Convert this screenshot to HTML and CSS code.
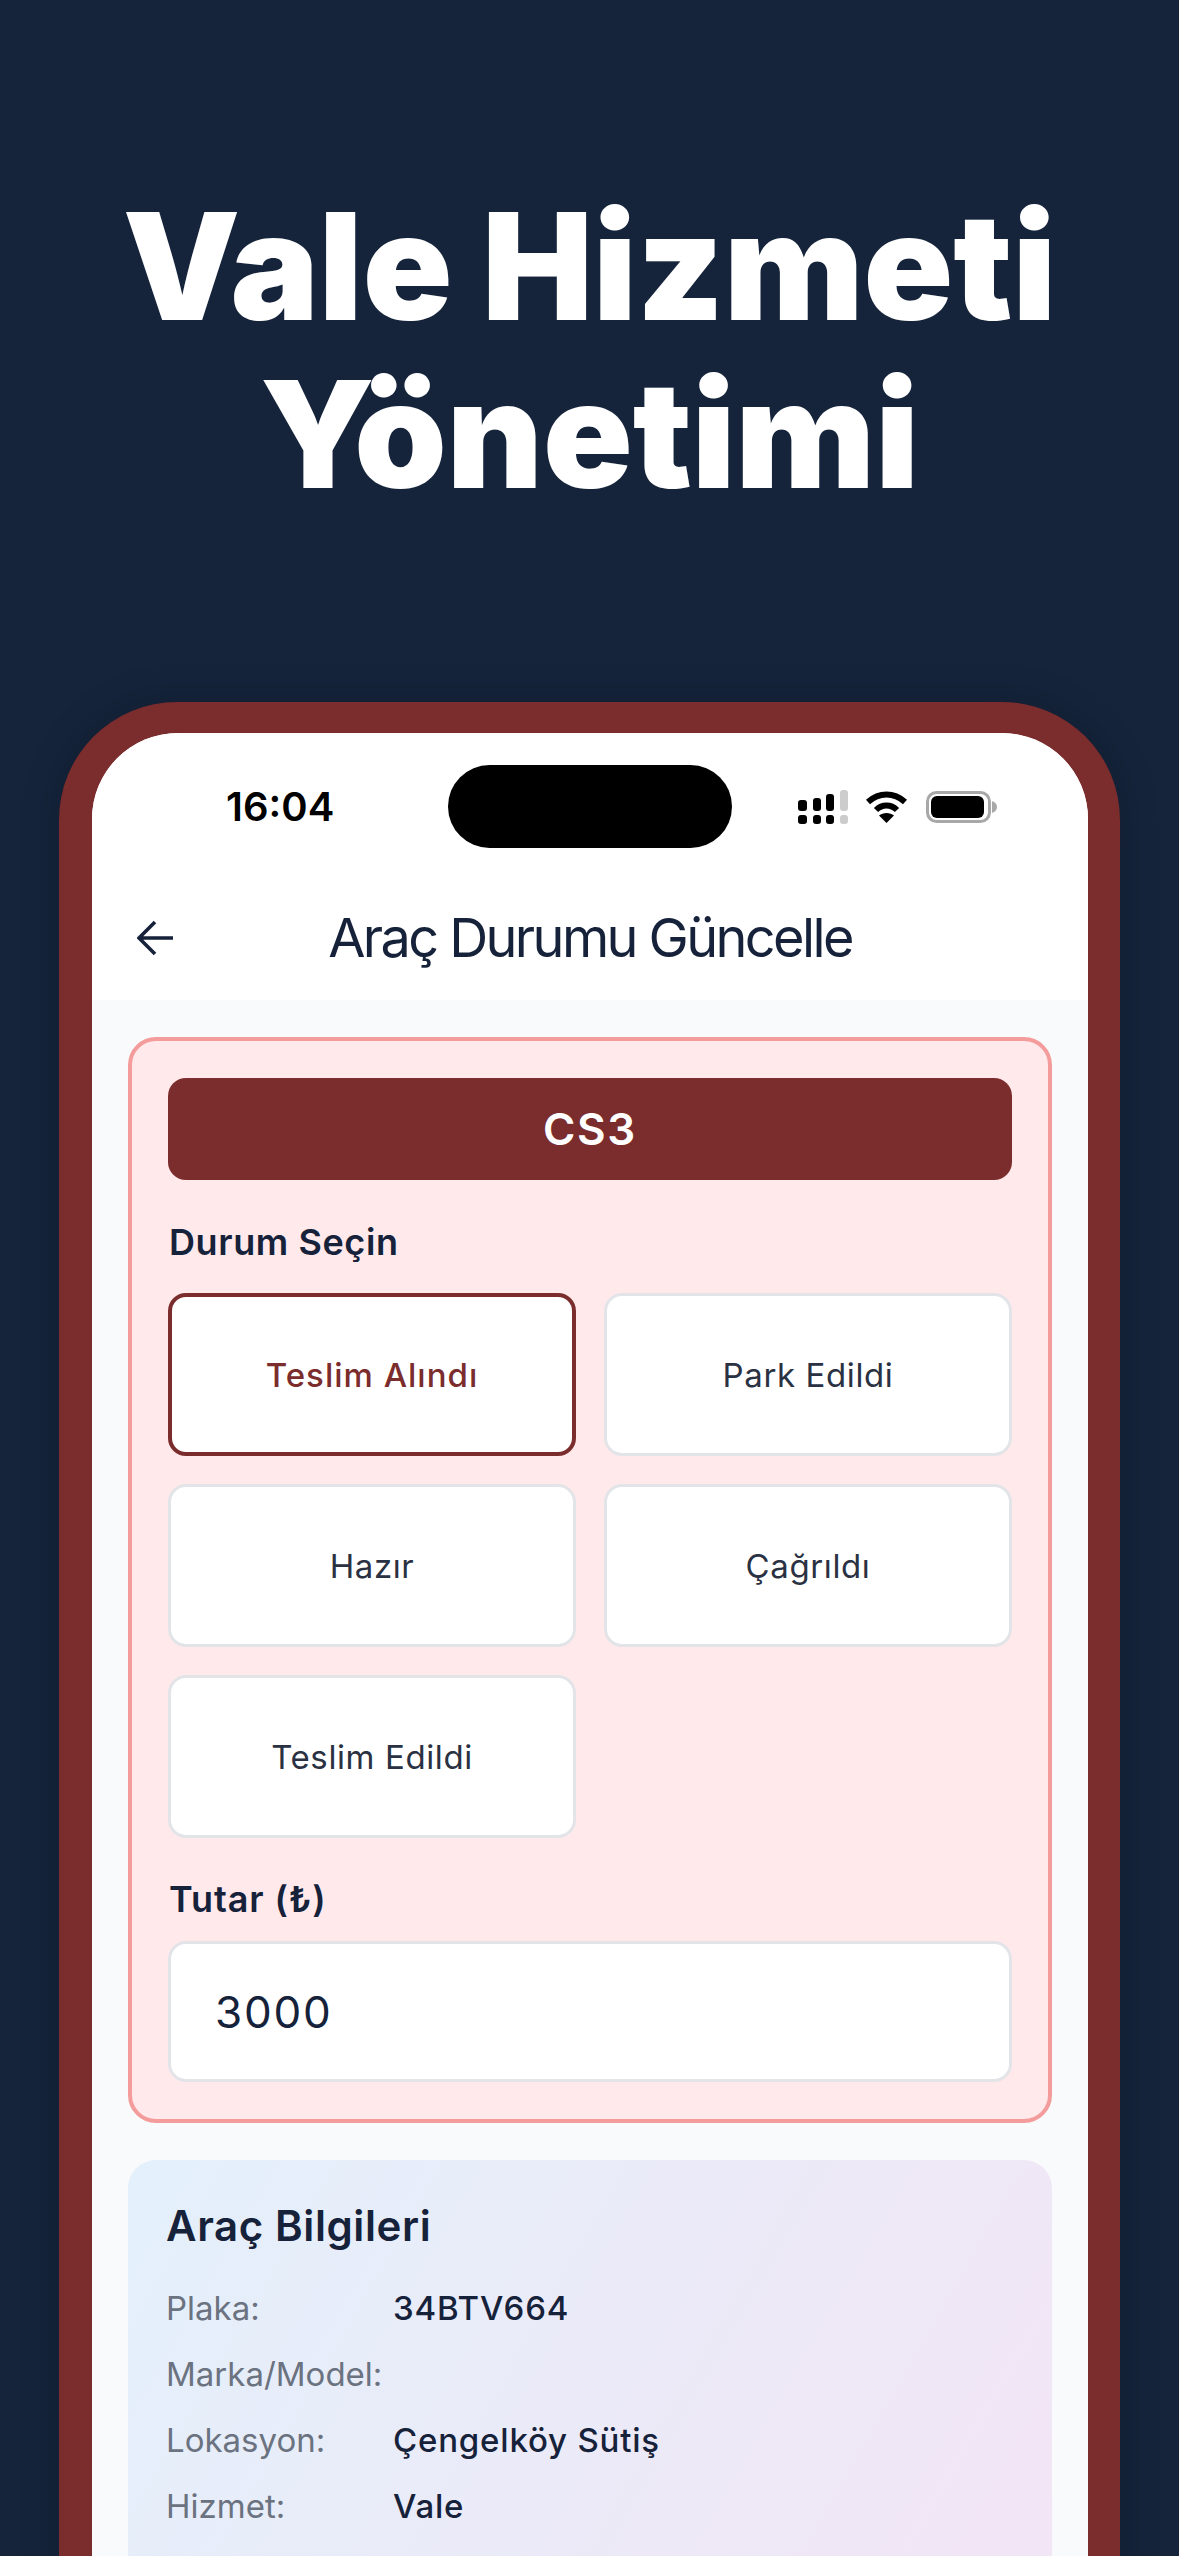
FILE: index.html
```html
<!DOCTYPE html>
<html lang="tr">
<head>
  <meta charset="UTF-8">
  <meta name="viewport" content="width=device-width, initial-scale=1.0">
  <title>Vale Hizmeti Yönetimi</title>
  <link rel="stylesheet" href="styles.css">
</head>
<body>
  <div class="page">
    <h1 class="headline">Vale Hizmeti<br>Yönetimi</h1>

    <div class="phone">
      <div class="screen">
        <!-- Status bar -->
        <div class="status-bar">
          <span class="time">16:04</span>
          <div class="island"></div>
          <div class="status-icons">
            <svg class="signal" viewBox="0 0 50 34" width="50" height="34">
              <rect x="0" y="10" width="9" height="11" rx="3" fill="#000"/>
              <rect x="15" y="8" width="8" height="13" rx="3" fill="#000"/>
              <rect x="28" y="4" width="8" height="17" rx="3" fill="#000"/>
              <rect x="42" y="0" width="8" height="21" rx="3" fill="#ccc"/>
              <rect x="0" y="25" width="9" height="9" rx="3" fill="#000"/>
              <rect x="15" y="25" width="8" height="9" rx="3" fill="#000"/>
              <rect x="28" y="25" width="8" height="9" rx="3" fill="#000"/>
              <rect x="42" y="25" width="8" height="9" rx="3" fill="#ccc"/>
            </svg>
            <svg class="wifi" viewBox="0 0 43 32" width="43" height="32">
              <path d="M3 11C14 1 29 1 40 11" fill="none" stroke="#000" stroke-width="6"/>
              <path d="M11 19C17 13 26 13 32 19" fill="none" stroke="#000" stroke-width="6"/>
              <path d="M21.5 32L14 24.5C18 21 25 21 29 24.5Z" fill="#000"/>
            </svg>
            <svg class="battery" viewBox="0 0 71 32" width="71" height="32">
              <rect x="1.5" y="1.5" width="62" height="29" rx="9" fill="none" stroke="#a8a8a8" stroke-width="3"/>
              <rect x="5" y="5" width="53" height="22" rx="6" fill="#000"/>
              <path d="M66 10C69 11 71 13 71 16C71 19 69 21 66 22Z" fill="#a8a8a8"/>
            </svg>
          </div>
        </div>

        <!-- Header -->
        <header class="nav">
          <svg class="back" viewBox="0 0 36 36" width="36" height="36">
            <path d="M36 18H3M18 2L2 18L18 34" fill="none" stroke="#16213a" stroke-width="3.6"/>
          </svg>
          <span class="nav-title">Araç Durumu Güncelle</span>
        </header>

        <main class="content">
          <section class="status-card">
            <div class="plate">CS3</div>
            <div class="field-label label-status">Durum Seçin</div>
            <div class="status-grid">
              <button class="status-btn active">Teslim Alındı</button>
              <button class="status-btn">Park Edildi</button>
              <button class="status-btn">Hazır</button>
              <button class="status-btn">Çağrıldı</button>
              <button class="status-btn">Teslim Edildi</button>
            </div>
            <div class="field-label label-amount">Tutar (₺)</div>
            <input class="amount" type="text" value="3000">
          </section>

          <section class="info-card">
            <h2>Araç Bilgileri</h2>
            <div class="info-row"><span class="info-key">Plaka:</span><span class="info-val">34BTV664</span></div>
            <div class="info-row"><span class="info-key">Marka/Model:</span><span class="info-val"></span></div>
            <div class="info-row"><span class="info-key">Lokasyon:</span><span class="info-val">Çengelköy Sütiş</span></div>
            <div class="info-row"><span class="info-key">Hizmet:</span><span class="info-val">Vale</span></div>
          </section>
        </main>
      </div>
    </div>
  </div>
</body>
</html>
```

FILE: styles.css
```css
body {
  margin: 0;
  padding: 0;
  font-family: Inter, "Noto Sans", sans-serif;
  background: #15243b;
  color: #16213a;
}
.page {
  height: 2556px;
  overflow: hidden;
  padding-top: 183px;
  box-sizing: border-box;
}
.headline {
  margin: 0 0 183px;
  text-align: center;
  font-family: Inter, sans-serif;
  font-weight: 900;
  font-size: 148px;
  line-height: 168px;
  color: #fff;
}

/* Phone frame */
.phone {
  margin: 0 59px;
  padding: 31px 32px 0 33px;
  background: #7b2c2c;
  border-radius: 118px 118px 0 0;
  box-shadow: 0 0 40px rgba(0, 0, 0, 0.2);
}
.screen {
  background: #f9fafb;
  border-radius: 86px 86px 0 0;
  overflow: hidden;
}
.status-bar {
  display: grid;
  grid-template-columns: 1fr 284px 1fr;
  align-items: center;
  padding-top: 32px;
  background: #fff;
}
.time {
  padding-left: 134px;
  font-weight: 600;
  font-size: 40px;
  line-height: 48px;
  color: #000;
}
.island {
  height: 83px;
  background: #000;
  border-radius: 42px;
}
.status-icons {
  display: flex;
  justify-content: flex-end;
  align-items: center;
  gap: 17px;
  padding-right: 91px;
}
.wifi {
  margin-right: 1px;
}
.nav {
  position: relative;
  height: 152px;
  padding-top: 26px;
  box-sizing: border-box;
  display: flex;
  align-items: center;
  justify-content: center;
  background: #fff;
}
.back {
  position: absolute;
  left: 45px;
  top: 72px;
}
.nav-title {
  font-size: 54px;
  letter-spacing: -2.6px;
}

/* Main content */
.content {
  padding: 37px 36px;
}
.status-card {
  padding: 37px 36px;
  background: #ffe9eb;
  border: 4px solid #f49c9c;
  border-radius: 28px;
}
.plate {
  height: 102px;
  line-height: 102px;
  text-align: center;
  font-weight: 600;
  font-size: 44px;
  letter-spacing: 1.6px;
  color: #fff;
  background: #7b2c2c;
  border-radius: 18px;
}
.field-label {
  font-weight: 600;
  font-size: 36px;
  line-height: 44px;
  letter-spacing: 0.6px;
  padding-left: 1px;
}
.label-status {
  margin: 40px 0 29px;
}
.label-amount {
  margin: 39px 0 20px;
  letter-spacing: 0.9px;
}
.status-grid {
  display: grid;
  grid-template-columns: 1fr 1fr;
  grid-auto-rows: 163px;
  gap: 28px;
}
.status-btn {
  padding: 0;
  font-family: inherit;
  font-size: 33px;
  letter-spacing: 0.6px;
  color: #2a3142;
  background: #fff;
  border: 3px solid #e3e4e8;
  border-radius: 18px;
}
.status-btn.active {
  font-weight: 500;
  letter-spacing: 1px;
  color: #7b2c2c;
  border: 4px solid #7b2c2c;
}
.amount {
  display: block;
  width: 100%;
  height: 141px;
  box-sizing: border-box;
  padding: 0 44px;
  font-family: inherit;
  font-size: 44px;
  letter-spacing: 1.8px;
  color: #16213a;
  background: #fff;
  border: 3px solid #e3e4e8;
  border-radius: 18px;
}
.info-card {
  margin-top: 37px;
  padding: 42px 38px 60px;
  background: linear-gradient(120deg, #e3f0fb, #f3e5f5);
  border-radius: 28px;
}
.info-card h2 {
  margin: 0 0 25px;
  font-weight: 600;
  font-size: 42px;
  line-height: 48px;
  letter-spacing: 0.6px;
}
.info-row {
  display: flex;
  height: 66px;
  align-items: center;
  font-size: 33px;
}
.info-key {
  width: 227px;
  color: #6b7280;
}
.info-val {
  font-weight: 450;
  letter-spacing: 0.8px;
  color: #16213a;
}
```
